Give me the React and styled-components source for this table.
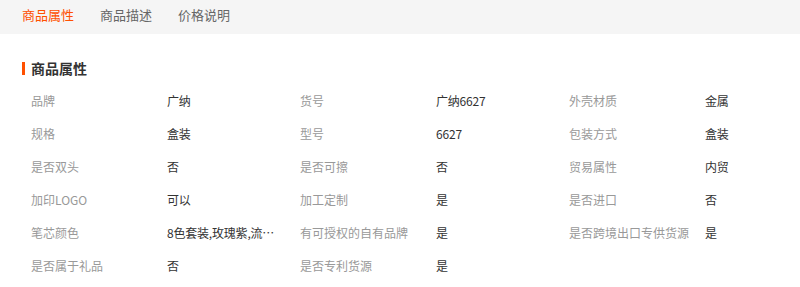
import React, { useState } from 'react';
import styled, { createGlobalStyle } from 'styled-components';

const GlobalStyle = createGlobalStyle`
  html, body {
    margin: 0;
    padding: 0;
    background: #fff;
    font-family: "Microsoft YaHei", "Noto Sans CJK SC", "Noto Sans", sans-serif;
    overflow: hidden;
  }
`;

const Page = styled.div`
  width: 800px;
  overflow: hidden;
`;

const TabBar = styled.div`
  height: 34px;
  background: #f5f5f5;
  display: flex;
  gap: 26px;
  padding-left: 22px;
`;

const Tab = styled.div`
  font-size: 13px;
  line-height: 30px;
  color: ${p => (p.$active ? '#ff5000' : '#666')};
  cursor: pointer;
`;

const Section = styled.div`
  padding: 0 0 0 22px;
`;

const Title = styled.h3`
  margin: 24px 0 0;
  display: flex;
  align-items: center;
  gap: 6px;
  font-size: 14px;
  line-height: 20px;
  font-weight: bold;
  color: #333;

  &::before {
    content: '';
    width: 3px;
    height: 13px;
    background: #ff5000;
  }
`;

const Grid = styled.div`
  margin-top: 6px;
  padding-left: 9px;
  display: grid;
  grid-template-columns: repeat(3, 136px 133px);
  grid-auto-rows: 33px;
  align-items: center;
  font-size: 12px;
`;

const Label = styled.div`
  color: #999;
  white-space: nowrap;
`;

const Value = styled.div`
  color: #333;
  white-space: nowrap;
  overflow: hidden;
  text-overflow: ellipsis;
  max-width: 118px;
  letter-spacing: -0.2px;
`;

const tabs = ['商品属性', '商品描述', '价格说明'];

const attrs = [
  ['品牌', '广纳'],
  ['货号', '广纳6627'],
  ['外壳材质', '金属'],
  ['规格', '盒装'],
  ['型号', '6627'],
  ['包装方式', '盒装'],
  ['是否双头', '否'],
  ['是否可擦', '否'],
  ['贸易属性', '内贸'],
  ['加印LOGO', '可以'],
  ['加工定制', '是'],
  ['是否进口', '否'],
  ['笔芯颜色', '8色套装,玫瑰紫,流光金,银色,白色,黑色'],
  ['有可授权的自有品牌', '是'],
  ['是否跨境出口专供货源', '是'],
  ['是否属于礼品', '否'],
  ['是否专利货源', '是'],
];

const App = () => {
  const [active, setActive] = useState(0);

  return (
    <Page>
      <GlobalStyle />
      <TabBar>
        {tabs.map((t, i) => (
          <Tab key={t} $active={i === active} onClick={() => setActive(i)}>
            {t}
          </Tab>
        ))}
      </TabBar>
      <Section>
        <Title>商品属性</Title>
        <Grid>
          {attrs.map(([k, v]) => (
            <React.Fragment key={k}>
              <Label>{k}</Label>
              <Value>{v}</Value>
            </React.Fragment>
          ))}
        </Grid>
      </Section>
    </Page>
  );
};

export default App;
